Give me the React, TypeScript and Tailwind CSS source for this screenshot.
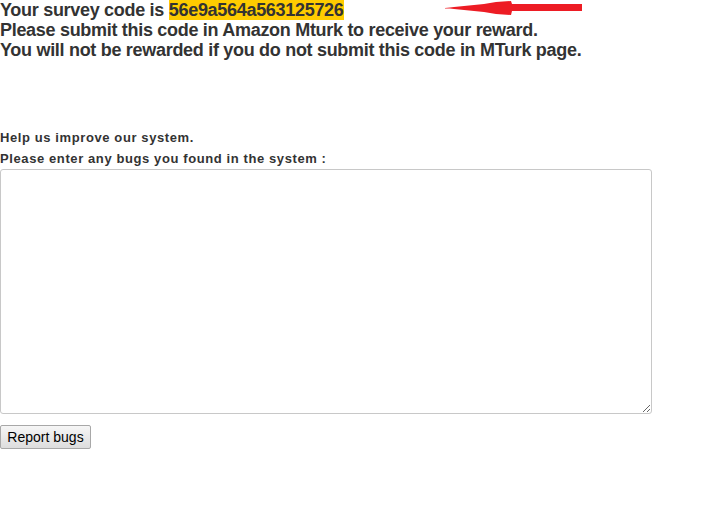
import React from "react";

export default function App() {
  return (
    <div className="relative w-[721px] h-[526px] bg-white text-[#333]" style={{ fontFamily: '"Liberation Sans", Arial, sans-serif' }}>
      <div className="text-[18px] font-bold leading-[20px] tracking-[-0.3px]">
        <div>
          Your survey code is <span className="bg-[#ffcc00]">56e9a564a563125726</span>
        </div>
        <div>Please submit this code in Amazon Mturk to receive your reward.</div>
        <div>You will not be rewarded if you do not submit this code in MTurk page.</div>
      </div>
      <svg className="absolute left-[444px] top-0" width="140" height="17" viewBox="0 0 140 17">
        <polygon
          points="1,8 6,7.5 10,7 20,6 30,5 40,4 52,2 67,1 68,4 138,4 138,11 68,11 67,15 52,14 40,12 30,11 20,10 10,9 6,8.5 1,8.5"
          fill="#ed1c24"
        />
      </svg>
      <div className="mt-[67px] text-[13px] font-bold leading-[21px] tracking-[0.6px]">
        <div>Help us improve our system.</div>
        <div>Please enter any bugs you found in the system :</div>
      </div>
      <textarea className="block w-[652px] h-[245px] border border-[#c8c8c8] rounded-[3px] resize-y" />
      <button className="mt-[11px] h-[24px] w-[91px] border border-[#a8a8a8] rounded-[2px] bg-gradient-to-b from-[#f6f6f6] to-[#dddddd] text-[14px] text-black">
        Report bugs
      </button>
    </div>
  );
}
